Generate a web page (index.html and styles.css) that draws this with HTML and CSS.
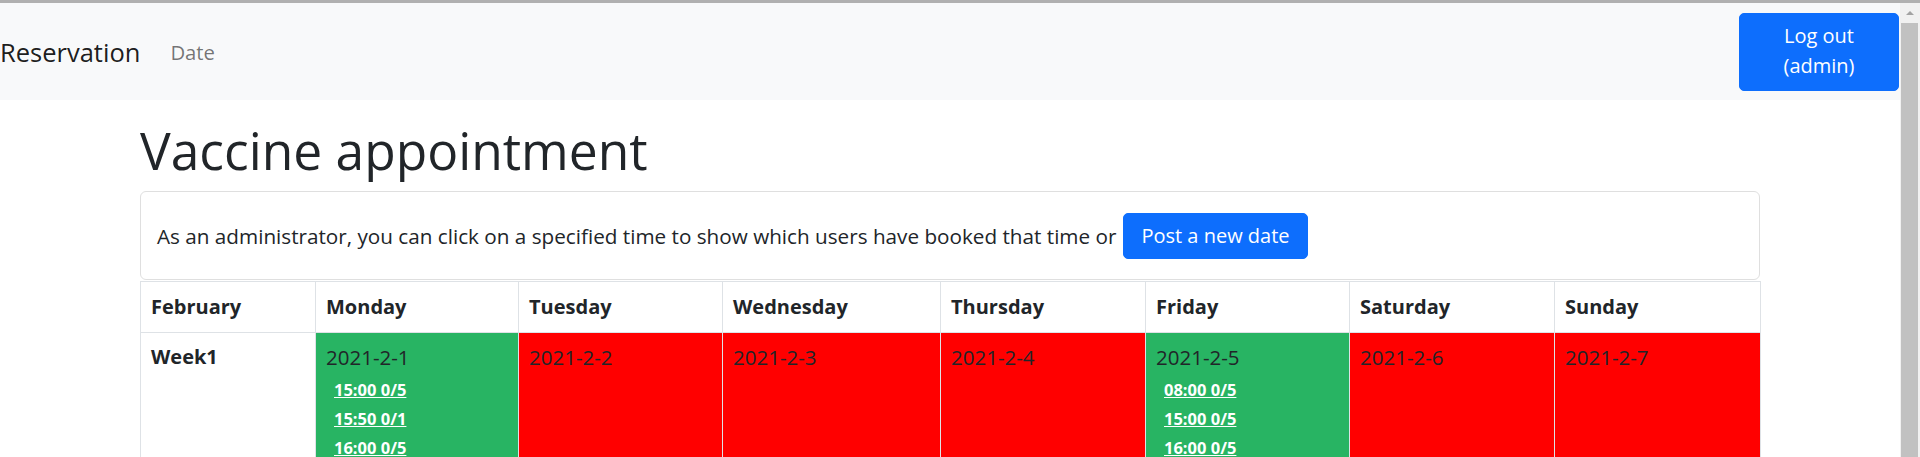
FILE: index.html
```html
<!DOCTYPE html>
<html lang="en">
<head>
<meta charset="utf-8">
<title>Vaccine appointment</title>
<link rel="stylesheet" href="styles.css">
</head>
<body>
<div class="frame-top"></div>
<div class="page">
  <nav class="navbar">
    <div class="nav-left">
      <a class="brand" href="#">Reservation</a>
      <a class="nav-link" href="#">Date</a>
    </div>
    <button class="btn btn-primary btn-logout" type="button">Log out<br>(admin)</button>
  </nav>
  <main class="container">
    <h1 class="title">Vaccine appointment</h1>
    <div class="card">
      <span class="card-text">As an administrator, you can click on a specified time to show which users have booked that time or</span>
      <button class="btn btn-primary btn-post" type="button">Post a new date</button>
    </div>
    <table class="calendar">
      <thead>
        <tr>
          <th class="c-month">February</th>
          <th class="c-mon">Monday</th>
          <th class="c-tue">Tuesday</th>
          <th class="c-wed">Wednesday</th>
          <th class="c-thu">Thursday</th>
          <th class="c-fri">Friday</th>
          <th class="c-sat">Saturday</th>
          <th class="c-sun">Sunday</th>
        </tr>
      </thead>
      <tbody>
        <tr>
          <th class="week">Week1</th>
          <td class="day open">
            <div class="date">2021-2-1</div>
            <div class="slots">
              <a class="slot" href="#">15:00 0/5</a>
              <a class="slot" href="#">15:50 0/1</a>
              <a class="slot" href="#">16:00 0/5</a>
            </div>
          </td>
          <td class="day closed"><div class="date">2021-2-2</div></td>
          <td class="day closed"><div class="date">2021-2-3</div></td>
          <td class="day closed"><div class="date">2021-2-4</div></td>
          <td class="day open">
            <div class="date">2021-2-5</div>
            <div class="slots">
              <a class="slot" href="#">08:00 0/5</a>
              <a class="slot" href="#">15:00 0/5</a>
              <a class="slot" href="#">16:00 0/5</a>
            </div>
          </td>
          <td class="day closed"><div class="date">2021-2-6</div></td>
          <td class="day closed"><div class="date">2021-2-7</div></td>
        </tr>
      </tbody>
    </table>
  </main>
</div>
<div class="scrollbar">
  <div class="scroll-up"><span class="arrow"></span></div>
  <div class="scroll-thumb"></div>
</div>
</body>
</html>
```
FILE: styles.css
```css
html, body {
  margin: 0;
  padding: 0;
  overflow: hidden;
  background: #fff;
}

body {
  font-family: "Open Sans", "Noto Sans", sans-serif;
  font-size: 20px;
  line-height: 32px;
  color: #212529;
}

.frame-top {
  height: 3px;
  background: #b0b0b0;
}

.page {
  margin-right: 20px;
}

/* Navbar */
.navbar {
  height: 97px;
  background: #f8f9fa;
  display: flex;
  align-items: center;
  justify-content: space-between;
}

.nav-left {
  display: flex;
  align-items: center;
}

.brand {
  font-size: 25.5px;
  line-height: 40px;
  color: rgba(0, 0, 0, 0.9);
  text-decoration: none;
  margin-right: 30px;
}

.nav-link {
  font-size: 20.3px;
  color: rgba(0, 0, 0, 0.55);
  text-decoration: none;
}

.btn {
  font-family: inherit;
  font-size: 20px;
  line-height: 30px;
  border: 1px solid #0d6efd;
  border-radius: 5px;
  cursor: pointer;
}

.btn-primary {
  background: #0d6efd;
  color: #fff;
}

.btn-logout {
  width: 160px;
  height: 78px;
  padding: 7px 10px 9px;
  margin-right: 1px;
  text-align: center;
}

/* Main */
.container {
  width: 1620px;
  margin: 0 auto;
}

.title {
  font-size: 51.5px;
  line-height: 61px;
  font-weight: 400;
  margin: 20px 0 10px;
}

.card {
  height: 87px;
  border: 1px solid #dfdfdf;
  border-radius: 6px;
  padding: 0 16px;
  display: flex;
  align-items: center;
  gap: 7px;
}

.card-text {
  font-size: 20.7px;
}

.btn-post {
  line-height: 32px;
  padding: 6px 17px;
}

/* Calendar table */
.calendar {
  width: 1620px;
  margin-top: 1px;
  border-collapse: collapse;
  table-layout: fixed;
}

.calendar th,
.calendar td {
  box-sizing: border-box;
  border: 1px solid #dee2e6;
  text-align: left;
  vertical-align: top;
}

.calendar thead th {
  font-weight: 700;
  padding: 9px 10px;
  height: 51px;
}

.c-month { width: 175px; }
.c-mon { width: 203px; }
.c-tue { width: 204px; }
.c-wed { width: 218px; }
.c-thu { width: 205px; }
.c-fri { width: 204px; }
.c-sat { width: 205px; }
.c-sun { width: 206px; }

.calendar tbody th,
.calendar tbody td {
  padding: 8px 10px 10px;
}

.week {
  font-weight: 700;
}

.open {
  background: #28b463;
}

.closed {
  background: #ff0000;
}

.date {
  font-size: 20.5px;
}

.slots {
  padding-top: 2px;
  padding-left: 8px;
}

.slot {
  display: block;
  font-size: 16.5px;
  line-height: 29px;
  font-weight: 700;
  color: #fff;
  text-decoration: underline;
}

/* Fake window scrollbar */
.scrollbar {
  position: fixed;
  top: 3px;
  right: 0;
  bottom: 0;
  width: 20px;
  background: #f1f1f1;
}

.scroll-up {
  height: 20px;
  display: flex;
  align-items: center;
  justify-content: center;
}

.arrow {
  width: 0;
  height: 0;
  border-left: 4px solid transparent;
  border-right: 4px solid transparent;
  border-bottom: 4px solid #a3a3a3;
}

.scroll-thumb {
  position: absolute;
  top: 20px;
  left: 1px;
  width: 17px;
  bottom: 0;
  background: #c1c1c1;
}
```
